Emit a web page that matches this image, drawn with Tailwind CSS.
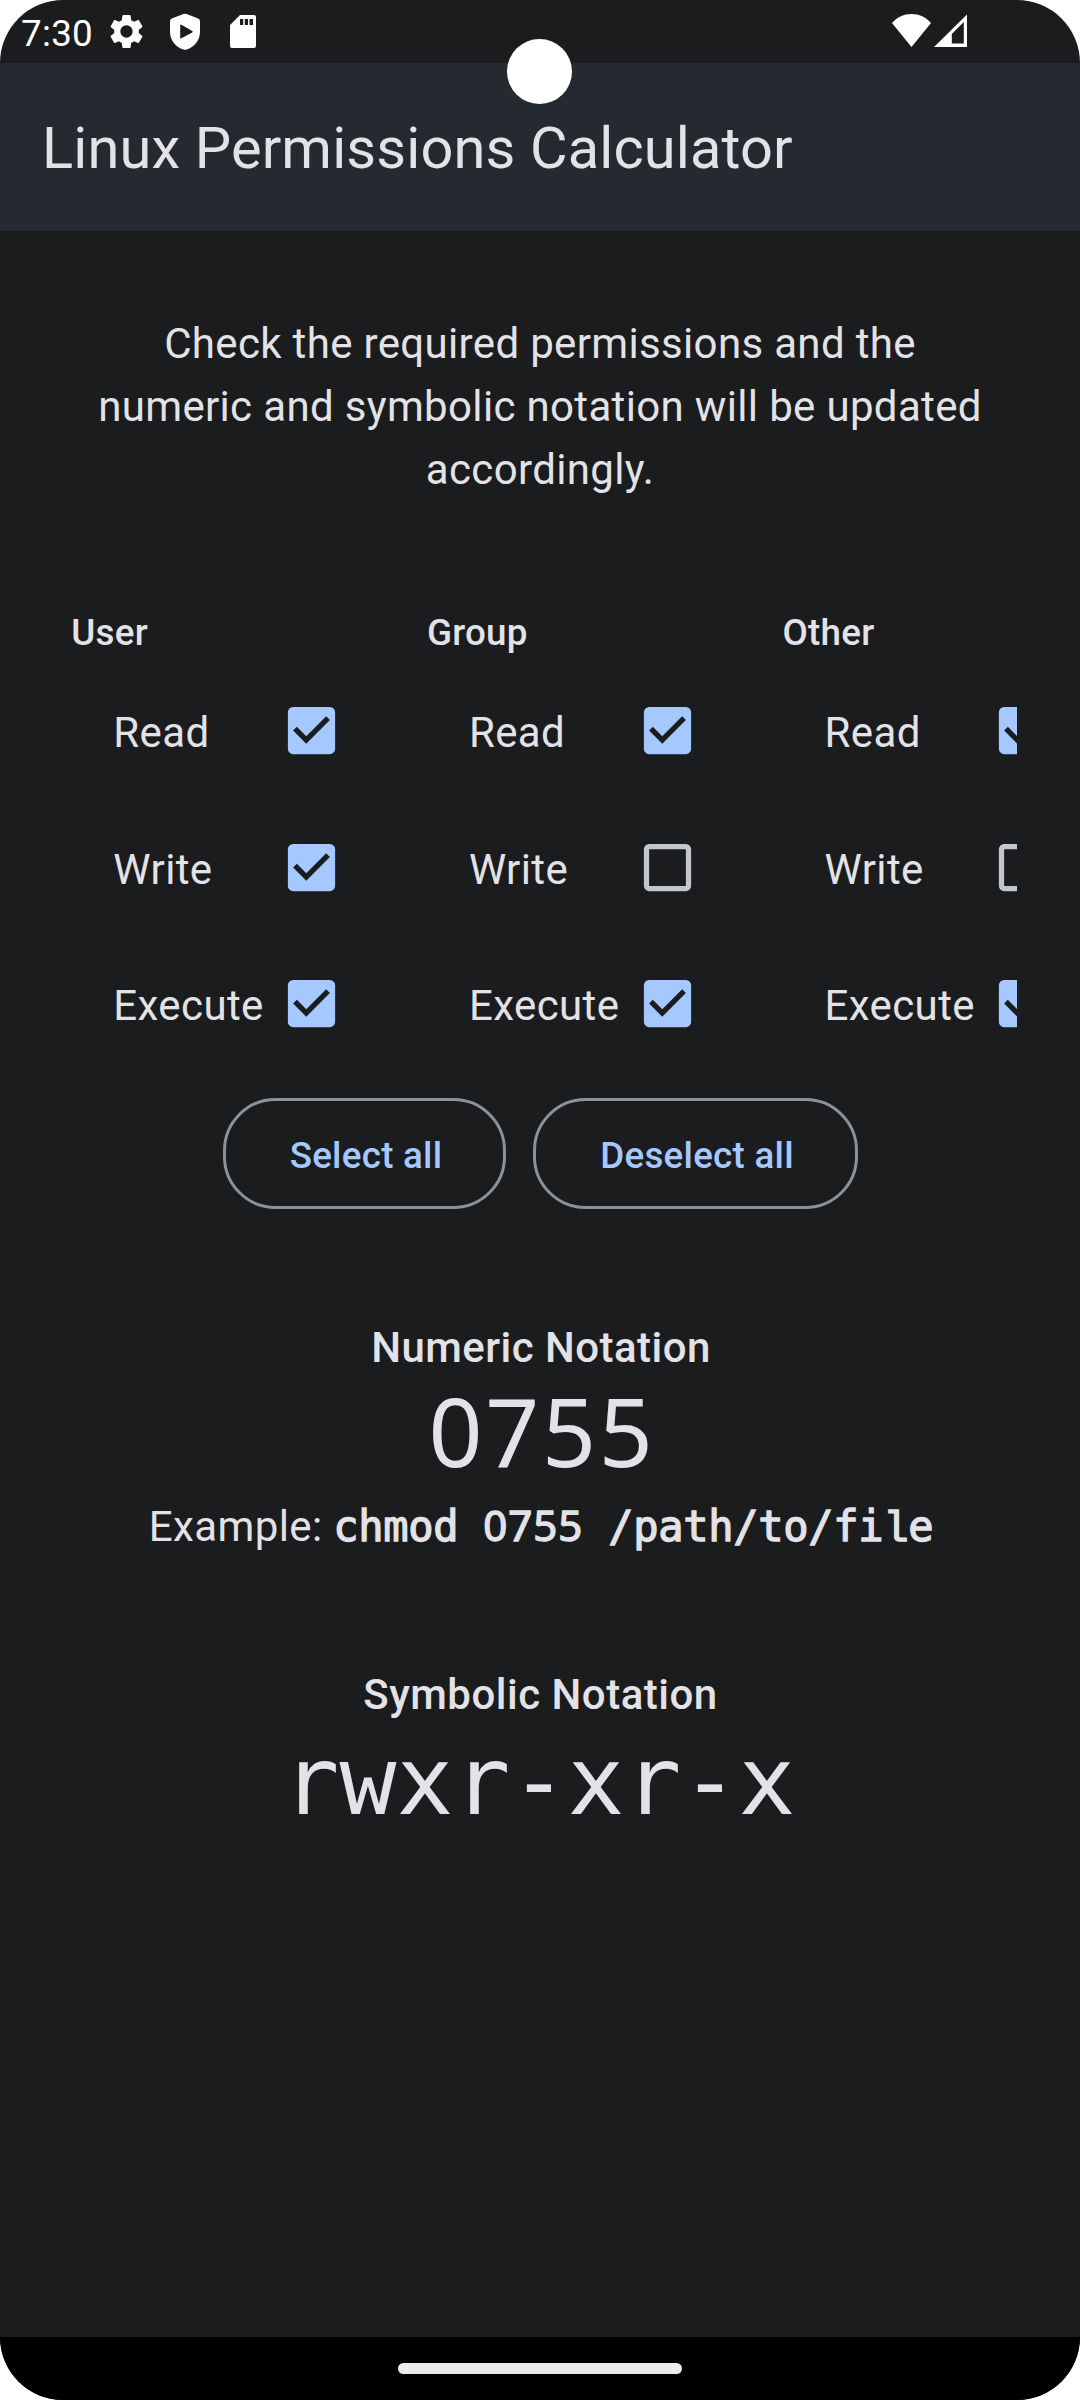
<!DOCTYPE html>
<html lang="en">
<head>
<meta charset="utf-8">
<title>Linux Permissions Calculator</title>
<script src="https://cdn.jsdelivr.net/npm/@tailwindcss/browser@4"></script>
</head>
<body class="bg-white">
<svg class="hidden">
  <symbol id="checked" viewBox="0 0 24 24"><path fill="#a4c8ff" d="M19 3H5a2 2 0 0 0-2 2v14a2 2 0 0 0 2 2h14a2 2 0 0 0 2-2V5a2 2 0 0 0-2-2zm-9 14l-5-5 1.41-1.41L10 14.17l7.59-7.59L19 8l-9 9z"/></symbol>
  <symbol id="unchecked" viewBox="0 0 24 24"><path fill="#c3c6cf" d="M19 5v14H5V5h14m0-2H5a2 2 0 0 0-2 2v14a2 2 0 0 0 2 2h14a2 2 0 0 0 2-2V5a2 2 0 0 0-2-2z"/></symbol>
</svg>
<div class="relative flex h-[2400px] w-[1080px] flex-col overflow-hidden rounded-[63px] bg-[#1a1c1e] font-['Roboto',sans-serif] text-[#e3e2e6]">
  <!-- Status bar -->
  <div class="flex h-[63px] shrink-0 items-start justify-between pl-[21px] pr-[113px] text-white">
    <div class="flex items-start">
      <span class="w-[85px] pt-[12px] text-[36.75px] leading-[43px] tracking-[0.300px]">7:30</span>
      <svg class="mt-[11px] h-[41px] w-[41px]" viewBox="0 0 24 24" fill="currentColor"><path d="M19.14 12.94c.04-.3.06-.61.06-.94 0-.32-.02-.64-.07-.94l2.03-1.58c.18-.14.23-.41.12-.61l-1.92-3.32c-.12-.22-.37-.29-.59-.22l-2.39.96c-.5-.38-1.03-.7-1.62-.94l-.36-2.54c-.04-.24-.24-.41-.48-.41h-3.84c-.24 0-.43.17-.47.41l-.36 2.54c-.59.24-1.13.57-1.62.94l-2.39-.96c-.22-.08-.47 0-.59.22L2.74 8.87c-.12.21-.08.47.12.61l2.03 1.58c-.05.3-.09.63-.09.94s.02.64.07.94l-2.03 1.58c-.18.14-.23.41-.12.61l1.92 3.32c.12.22.37.29.59.22l2.39-.96c.5.38 1.03.7 1.62.94l.36 2.54c.05.24.24.41.48.41h3.84c.24 0 .44-.17.47-.41l.36-2.54c.59-.24 1.13-.56 1.62-.94l2.39.96c.22.08.47 0 .59-.22l1.92-3.32c.12-.22.07-.47-.12-.61l-2.01-1.58zM12 15.6c-1.98 0-3.6-1.62-3.6-3.6s1.62-3.6 3.6-3.6 3.6 1.62 3.6 3.6-1.62 3.6-3.6 3.6z"/></svg>
      <svg class="ml-[23px] mt-[13px] h-[38px] w-[30px]" viewBox="0 0 30 38" fill="currentColor"><path fill-rule="evenodd" d="M13.4 1.1Q15 .4 16.6 1.1L28.2 5.6Q30 6.4 30 8.2V19C30 27.500 24 34.300 16.600 36.500Q15 37.100 13.400 36.500C6 34.300 0 27.500 0 19V8.200Q0 6.400 1.800 5.600ZM10.200 12.300V24.700Q10.200 26 11.400 25.300L22.200 19.400Q23.300 18.700 22.200 18L11.400 11.700Q10.200 11 10.200 12.300Z"/></svg>
      <svg class="ml-[30px] mt-[15px] h-[33px] w-[26px]" viewBox="0 0 26 33" fill="currentColor"><path fill-rule="evenodd" d="M10 0H24A2 2 0 0 1 26 2V31A2 2 0 0 1 24 33H2A2 2 0 0 1 0 31V10ZM10 4V10H13.200V4ZM14.800 4V10H18V4ZM19.500 4V10H23V4Z"/></svg>
    </div>
    <div class="flex items-start gap-[3px]">
      <svg class="mt-[14px] h-[33px] w-[39px]" viewBox="0 0 39 33" fill="currentColor"><path d="M19.500 0C12 0 5.200 3 0 9L19.500 33 39 9C33.800 3 27 0 19.500 0Z"/></svg>
      <svg class="mt-[14px] h-[33px] w-[33px]" viewBox="0 0 33 33" fill="currentColor"><path fill-rule="evenodd" d="M33 .5V33H0ZM29.800 8L17.800 20V29.500H29.800Z"/></svg>
    </div>
  </div>
  <!-- Camera cutout -->
  <div class="absolute left-[507px] top-[39px] size-[65px] rounded-full bg-white"></div>
  <!-- App bar -->
  <header class="flex h-[168px] shrink-0 items-center bg-[#252a30] pl-[42px] pt-[2px]">
    <h1 class="text-[57.75px] leading-[74px] tracking-[0.140px]">Linux Permissions Calculator</h1>
  </header>
  <!-- Content -->
  <main class="flex grow flex-col items-center px-[63px]">
    <p class="mt-[81px] w-full text-center text-[42px] leading-[63px] tracking-[0.340px]">Check the required permissions and the<br>numeric and symbolic notation will be updated<br>accordingly.</p>
    <div class="mt-[105px] flex h-[465.300px] w-full overflow-hidden pl-[8.300px]">
      <section class="w-[355.600px] shrink-0">
        <h2 class="h-[55.800px] pt-px text-[36.75px] font-medium leading-[52px] tracking-[0.26px]">User</h2>
        <div class="flex h-[136.500px] items-center pl-[42px]"><span class="w-[166.700px] pt-[5px] text-[42px] leading-[63px] tracking-[0.390px]">Read</span><svg class="size-[63px] shrink-0"><use href="#checked"/></svg></div>
        <div class="flex h-[137.500px] items-center pl-[42px]"><span class="w-[166.700px] pt-[5px] text-[42px] leading-[63px] tracking-[0.390px]">Write</span><svg class="size-[63px] shrink-0"><use href="#checked"/></svg></div>
        <div class="flex h-[134.500px] items-center pl-[42px]"><span class="w-[166.700px] pt-[5px] text-[42px] leading-[63px] tracking-[0.390px]">Execute</span><svg class="size-[63px] shrink-0"><use href="#checked"/></svg></div>
      </section>
      <section class="w-[355.600px] shrink-0">
        <h2 class="h-[55.800px] pt-px text-[36.75px] font-medium leading-[52px] tracking-[0.26px]">Group</h2>
        <div class="flex h-[136.500px] items-center pl-[42px]"><span class="w-[166.700px] pt-[5px] text-[42px] leading-[63px] tracking-[0.390px]">Read</span><svg class="size-[63px] shrink-0"><use href="#checked"/></svg></div>
        <div class="flex h-[137.500px] items-center pl-[42px]"><span class="w-[166.700px] pt-[5px] text-[42px] leading-[63px] tracking-[0.390px]">Write</span><svg class="size-[63px] shrink-0"><use href="#unchecked"/></svg></div>
        <div class="flex h-[134.500px] items-center pl-[42px]"><span class="w-[166.700px] pt-[5px] text-[42px] leading-[63px] tracking-[0.390px]">Execute</span><svg class="size-[63px] shrink-0"><use href="#checked"/></svg></div>
      </section>
      <section class="w-[355.600px] shrink-0">
        <h2 class="h-[55.800px] pt-px text-[36.75px] font-medium leading-[52px] tracking-[0.26px]">Other</h2>
        <div class="flex h-[136.500px] items-center pl-[42px]"><span class="w-[166.700px] pt-[5px] text-[42px] leading-[63px] tracking-[0.390px]">Read</span><svg class="size-[63px] shrink-0"><use href="#checked"/></svg></div>
        <div class="flex h-[137.500px] items-center pl-[42px]"><span class="w-[166.700px] pt-[5px] text-[42px] leading-[63px] tracking-[0.390px]">Write</span><svg class="size-[63px] shrink-0"><use href="#unchecked"/></svg></div>
        <div class="flex h-[134.500px] items-center pl-[42px]"><span class="w-[166.700px] pt-[5px] text-[42px] leading-[63px] tracking-[0.390px]">Execute</span><svg class="size-[63px] shrink-0"><use href="#checked"/></svg></div>
      </section>
    </div>
    <div class="mt-[26.700px] flex gap-[27px] text-[36.75px] font-medium leading-[52px] tracking-[0.26px] text-[#a4c8ff]">
      <button class="h-[111px] w-[283px] rounded-[52.500px] border-[3px] border-[#8d9199] pl-[4px] pt-[5px]">Select all</button>
      <button class="h-[111px] w-[325px] rounded-[52.500px] border-[3px] border-[#8d9199] pl-[4px] pt-[5px]">Deselect all</button>
    </div>
    <h2 class="mt-[107px] pl-[2px] text-[42px] font-medium leading-[63px] tracking-[0.450px]">Numeric Notation</h2>
    <div class="mt-[2px] h-[114px] pl-[4px] font-['Noto_Sans',sans-serif] text-[94.500px] leading-[100px] tracking-[2.700px]">0755</div>
    <p class="h-[63px] whitespace-nowrap pl-[2px] text-[42px] leading-[63px] tracking-[0.390px]">Example: <span class="font-['DejaVu_Sans_Mono',monospace] leading-none tracking-[-0.300px] whitespace-pre [-webkit-text-stroke:1.3px_#e3e2e6]">chmod <span class="font-['Noto_Sans',sans-serif] leading-none tracking-[1px]">0755</span> /path/to/fi<span class="font-['Liberation_Mono',monospace] leading-none tracking-[-0.150px]">l</span>e</span></p>
    <h2 class="mt-[105px] pl-px text-[42px] font-medium leading-[63px] tracking-[0.500px]">Symbolic Notation</h2>
    <div class="mt-[5px] pr-[2px] font-['DejaVu_Sans_Mono',monospace] text-[94.500px] leading-[100px] tracking-[0.110px]">rwxr-xr-x</div>
  </main>
  <!-- Gesture navigation bar -->
  <div class="flex h-[63px] shrink-0 items-center justify-center bg-black">
    <div class="h-[10.500px] w-[284px] rounded-full bg-[#ebebeb]"></div>
  </div>
</div>
</body>
</html>
